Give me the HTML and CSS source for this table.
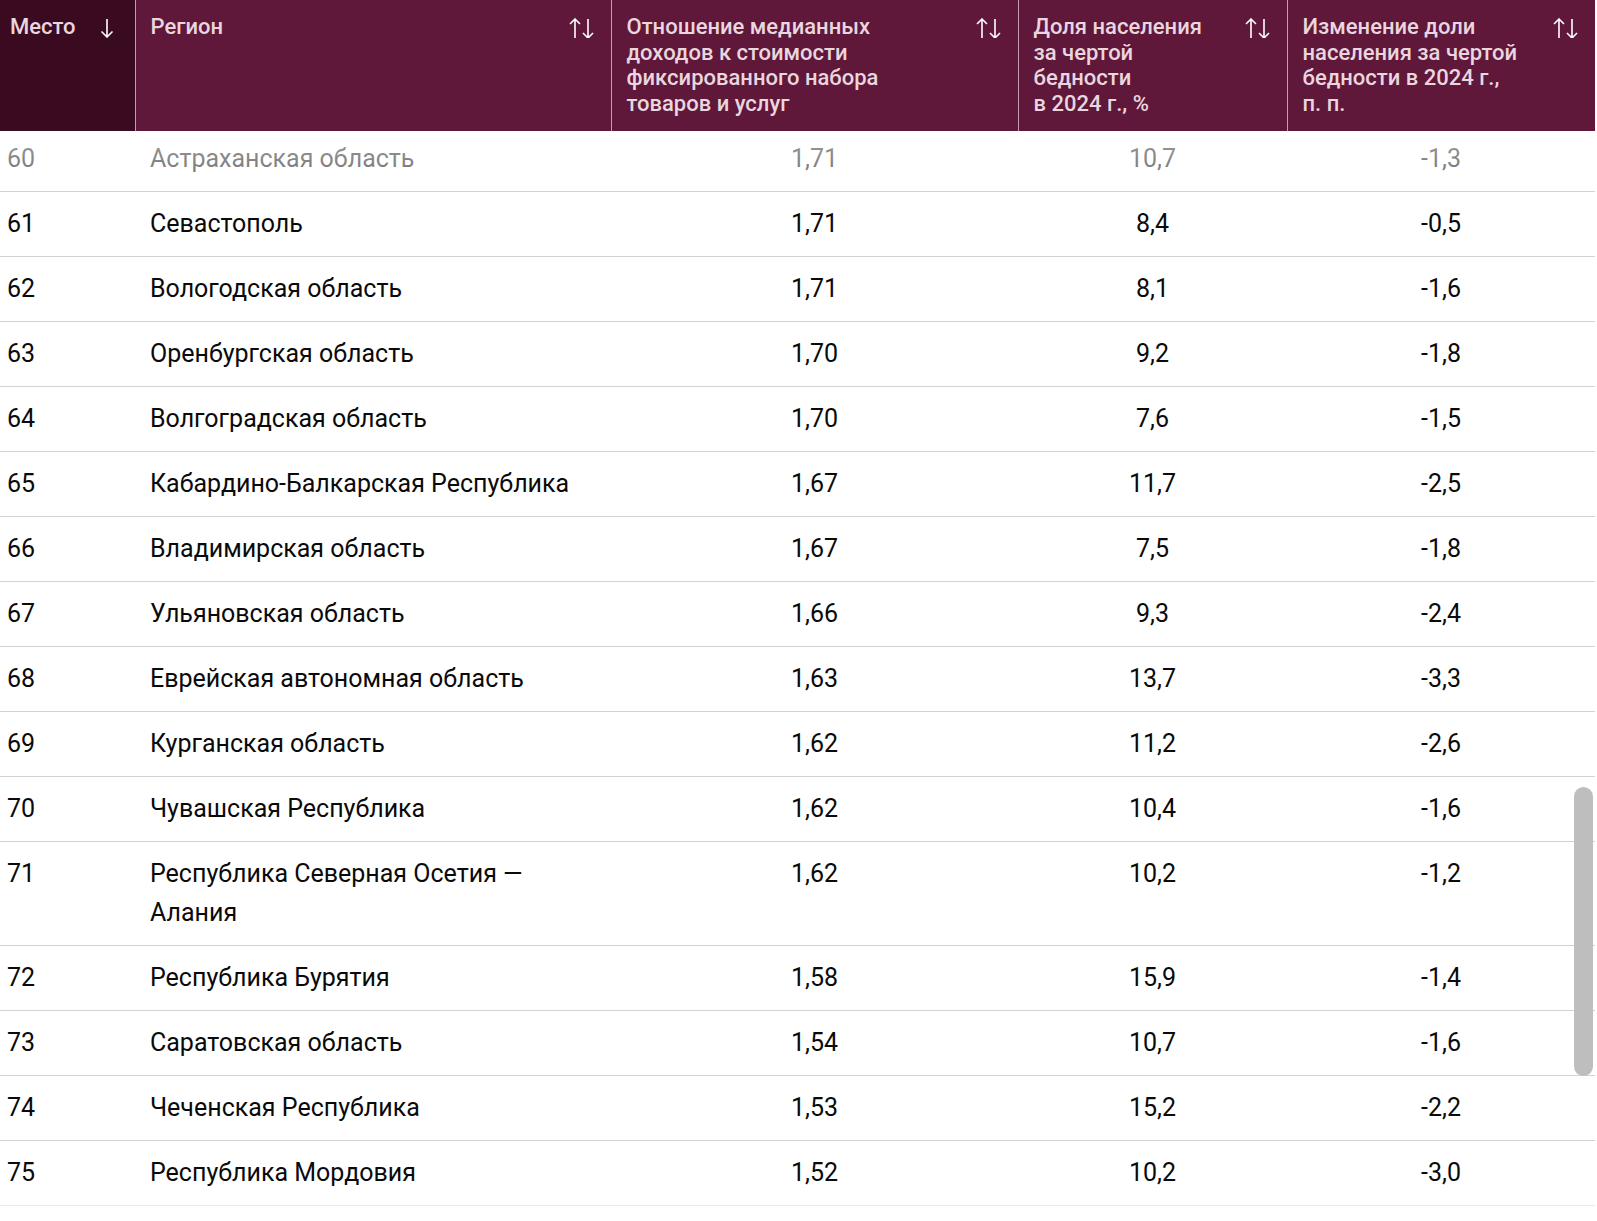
FILE: index.html
```html
<!DOCTYPE html>
<html lang="ru">
<head>
<meta charset="utf-8">
<title>Рейтинг регионов</title>
<link rel="stylesheet" href="styles.css">
</head>
<body>
<div class="wrap">
  <table class="rating">
    <colgroup>
      <col class="c-place"><col class="c-region"><col class="c-ratio"><col class="c-share"><col class="c-change">
    </colgroup>
    <thead>
      <tr>
        <th class="th-place"><div class="th-in"><span>Место</span>
          <svg class="sort one" viewBox="0 0 14 20"><path d="M7 1v18M1.5 13.5L7 19l5.5-5.5"/></svg></div></th>
        <th><div class="th-in"><span>Регион</span>
          <svg class="sort" viewBox="0 0 26 20"><path d="M6 1v19M1 6l5-5 5 5M19 1v19M14 15l5 5 5-5"/></svg></div></th>
        <th><div class="th-in"><span>Отношение медианных<br>доходов к стоимости<br>фиксированного набора<br>товаров и услуг</span>
          <svg class="sort" viewBox="0 0 26 20"><path d="M6 1v19M1 6l5-5 5 5M19 1v19M14 15l5 5 5-5"/></svg></div></th>
        <th><div class="th-in"><span>Доля населения<br>за чертой<br>бедности<br>в 2024 г., %</span>
          <svg class="sort" viewBox="0 0 26 20"><path d="M6 1v19M1 6l5-5 5 5M19 1v19M14 15l5 5 5-5"/></svg></div></th>
        <th><div class="th-in"><span>Изменение доли<br>населения за чертой<br>бедности в 2024 г.,<br>п. п.</span>
          <svg class="sort" viewBox="0 0 26 20"><path d="M6 1v19M1 6l5-5 5 5M19 1v19M14 15l5 5 5-5"/></svg></div></th>
      </tr>
    </thead>
    <tbody>
      <tr class="cut"><td>60</td><td>Астраханская область</td><td>1,71</td><td>10,7</td><td>-1,3</td></tr>
      <tr><td>61</td><td>Севастополь</td><td>1,71</td><td>8,4</td><td>-0,5</td></tr>
      <tr><td>62</td><td>Вологодская область</td><td>1,71</td><td>8,1</td><td>-1,6</td></tr>
      <tr><td>63</td><td>Оренбургская область</td><td>1,70</td><td>9,2</td><td>-1,8</td></tr>
      <tr><td>64</td><td>Волгоградская область</td><td>1,70</td><td>7,6</td><td>-1,5</td></tr>
      <tr><td>65</td><td>Кабардино-Балкарская Республика</td><td>1,67</td><td>11,7</td><td>-2,5</td></tr>
      <tr><td>66</td><td>Владимирская область</td><td>1,67</td><td>7,5</td><td>-1,8</td></tr>
      <tr><td>67</td><td>Ульяновская область</td><td>1,66</td><td>9,3</td><td>-2,4</td></tr>
      <tr><td>68</td><td>Еврейская автономная область</td><td>1,63</td><td>13,7</td><td>-3,3</td></tr>
      <tr><td>69</td><td>Курганская область</td><td>1,62</td><td>11,2</td><td>-2,6</td></tr>
      <tr><td>70</td><td>Чувашская Республика</td><td>1,62</td><td>10,4</td><td>-1,6</td></tr>
      <tr><td>71</td><td>Республика Северная Осетия —<br>Алания</td><td>1,62</td><td>10,2</td><td>-1,2</td></tr>
      <tr><td>72</td><td>Республика Бурятия</td><td>1,58</td><td>15,9</td><td>-1,4</td></tr>
      <tr><td>73</td><td>Саратовская область</td><td>1,54</td><td>10,7</td><td>-1,6</td></tr>
      <tr><td>74</td><td>Чеченская Республика</td><td>1,53</td><td>15,2</td><td>-2,2</td></tr>
      <tr class="last"><td>75</td><td>Республика Мордовия</td><td>1,52</td><td>10,2</td><td>-3,0</td></tr>
    </tbody>
  </table>
  <div class="fade"></div>
  <div class="thumb"></div>
</div>
</body>
</html>
```

FILE: styles.css
```css
html, body {
  margin: 0;
  padding: 0;
  background: #fff;
}
body {
  font-family: Roboto, "Liberation Sans", Arial, sans-serif;
  color: #000;
}
.wrap {
  position: relative;
  width: 1595px;
}
.rating {
  width: 1595px;
  border-collapse: collapse;
  table-layout: fixed;
}
.c-place { width: 135px; }
.c-region { width: 476px; }
.c-ratio { width: 407px; }
.c-share { width: 269px; }
.c-change { width: 308px; }

.rating th {
  background: #5f173a;
  color: #e9d6df;
  font-size: 22px;
  font-weight: 500;
  line-height: 25.5px;
  text-align: left;
  vertical-align: top;
  height: 131px;
  box-sizing: border-box;
  padding: 14px 16px 15px 15px;
  border-left: 1px solid #c49bb0;
}
.rating th:first-child {
  border-left: none;
  padding-left: 10px;
  padding-right: 21px;
}
.rating th.th-place {
  background: #3a0a21;
}
.th-in {
  display: flex;
  justify-content: space-between;
  align-items: flex-start;
  gap: 10px;
}
.sort {
  flex: none;
  width: 26px;
  height: 20px;
  margin-top: 4px;
  fill: none;
  stroke: #ffffff;
  stroke-width: 1.6;
}
.sort.one {
  width: 14px;
}

.rating td {
  font-size: 25px;
  line-height: 39px;
  padding: 12px 15px 13px 15px;
  border-bottom: 1px solid #d2d2d2;
  vertical-align: top;
  text-align: center;
  color: #0a0a0a;
}
.rating td:first-child {
  padding-left: 7px;
  text-align: left;
}
.rating td:nth-child(2) {
  text-align: left;
}
.rating tr.cut td {
  padding-top: 8px;
}
.rating tr.last td {
  border-bottom-color: #e9e9e9;
}
.fade {
  position: absolute;
  left: 0;
  top: 131px;
  width: 1595px;
  height: 60px;
  background: linear-gradient(rgba(255,255,255,0.62), rgba(255,255,255,0.38));
  pointer-events: none;
}
.thumb {
  position: absolute;
  left: 1574px;
  top: 787px;
  width: 19px;
  height: 289px;
  border-radius: 10px;
  background: #bebebe;
}
```
